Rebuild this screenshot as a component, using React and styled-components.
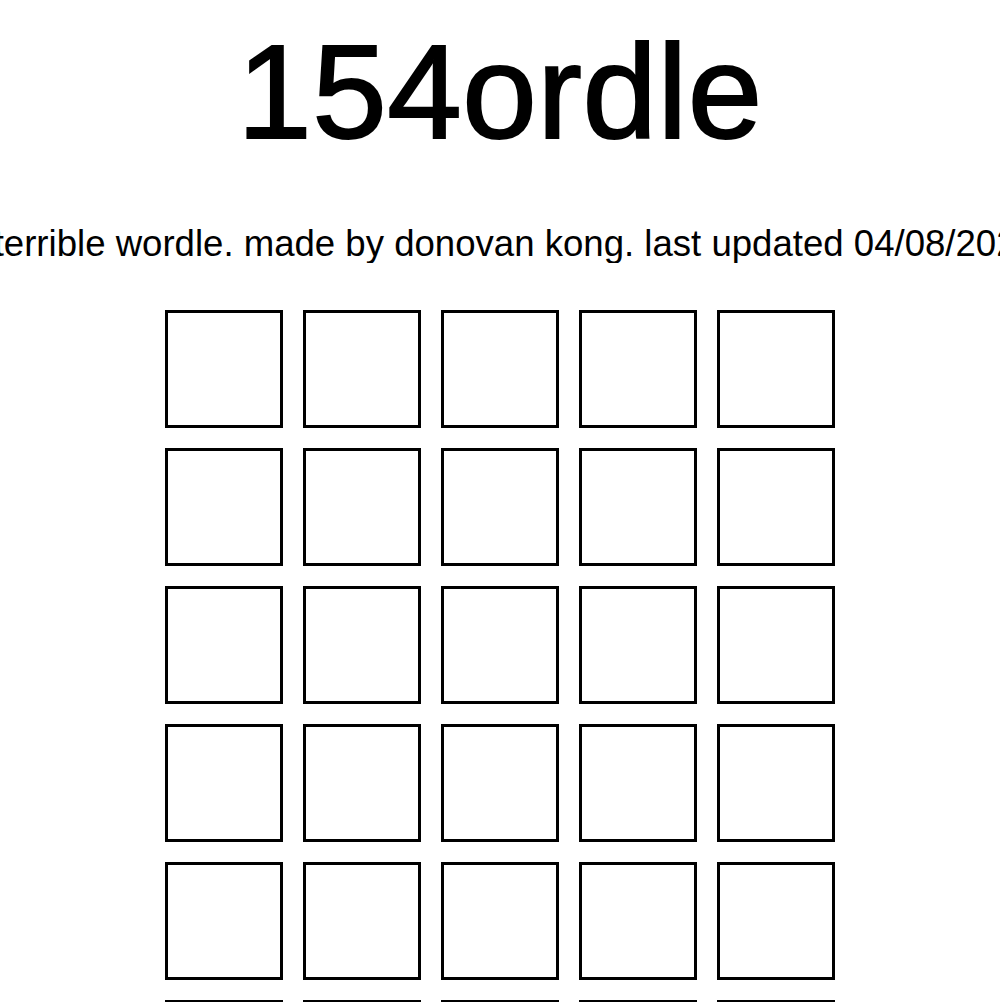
import React from "react";
import styled, { createGlobalStyle } from "styled-components";

const GlobalStyle = createGlobalStyle`
  html, body {
    margin: 0;
    padding: 0;
    background: #fff;
    color: #000;
    font-family: "Liberation Sans", Arial, sans-serif;
    overflow-x: hidden;
  }
  ::-webkit-scrollbar { display: none; }
`;

const Page = styled.main`
  display: flex;
  flex-direction: column;
  align-items: center;
  padding-top: 23px;
`;

const Title = styled.h1`
  margin: 0;
  height: 137px;
  font-size: 134px;
  line-height: 137px;
  font-weight: 400;
  letter-spacing: 0.5px;
  -webkit-text-stroke: 2px #000;
`;

const SubtitleRow = styled.div`
  width: 100%;
  display: flex;
  justify-content: center;
  overflow: hidden;
  margin-top: 66px;
`;

const Subtitle = styled.p`
  margin: 0;
  flex-shrink: 0;
  white-space: nowrap;
  font-size: 36.6px;
  line-height: 36.6px;
`;

const Board = styled.div`
  display: grid;
  grid-template-columns: repeat(5, 118px);
  grid-auto-rows: 118px;
  gap: 20px;
  margin-top: 47px;
`;

const Tile = styled.div`
  box-sizing: border-box;
  border: 3px solid #000;
  display: flex;
  align-items: center;
  justify-content: center;
  font-size: 60px;
  font-weight: 700;
  text-transform: uppercase;
`;

const ROWS = 6;
const COLS = 5;

const App = () => {
  const tiles = [];
  for (let r = 0; r < ROWS; r++) {
    for (let c = 0; c < COLS; c++) {
      tiles.push(<Tile key={r + "-" + c} />);
    }
  }

  return (
    <>
      <GlobalStyle />
      <Page>
        <Title>154ordle</Title>
        <SubtitleRow>
          <Subtitle>a terrible wordle. made by donovan kong. last updated 04/08/2022</Subtitle>
        </SubtitleRow>
        <Board>{tiles}</Board>
      </Page>
    </>
  );
};

export default App;
